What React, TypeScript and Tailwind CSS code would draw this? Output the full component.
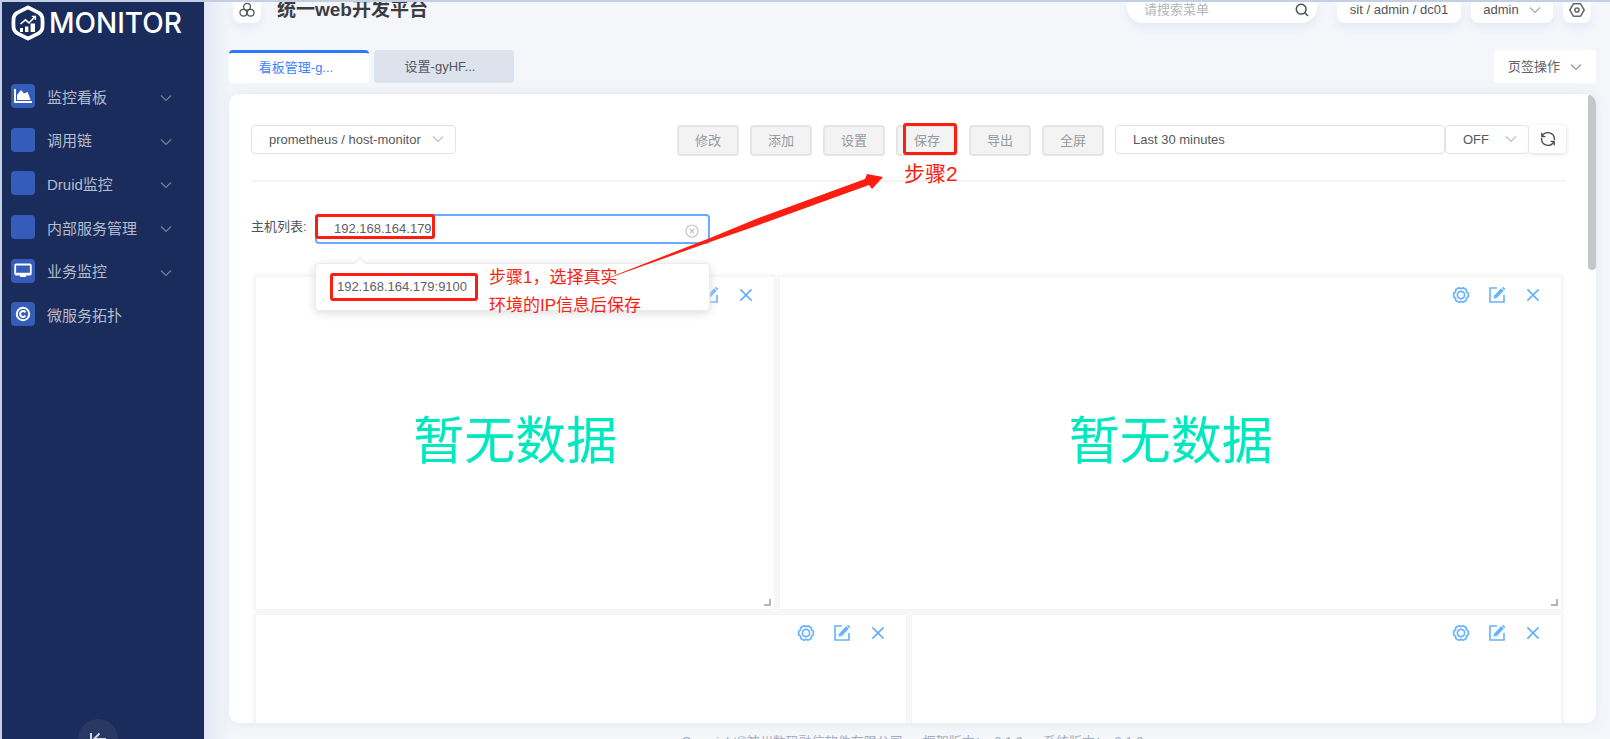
import type { ReactNode } from "react";

type IconProps = { className?: string };

function Chevron({ className = "" }: IconProps) {
  return (
    <svg viewBox="0 0 12 12" className={`size-3 shrink-0 ${className}`} fill="none" stroke="currentColor" strokeWidth="1.1">
      <path d="M1 3.5 6 8.5 11 3.5" />
    </svg>
  );
}

function LogoMark() {
  return (
    <svg viewBox="0 0 34 36" className="h-9 w-[34px] shrink-0" fill="none">
      <path d="M17 2.4 27.5 7.6Q30.8 9.5 31.4 13L31.6 18 31.4 23Q30.8 26.5 27.5 28.4L17 33.6 6.5 28.4Q3.2 26.5 2.6 23L2.4 18 2.6 13Q3.2 9.5 6.5 7.6Z" stroke="#fff" strokeWidth="3.8" strokeLinejoin="round" />
      <path d="M9.5 19 14.5 14.8 18 18 24 11.6" stroke="#fff" strokeWidth="1.6" />
      <path d="M20.8 11.4H24.4V15" stroke="#fff" strokeWidth="1.4" />
      <path d="M9 23h3v4H9zM14 21.5h3.4V27H14zM19.6 18.5H24V27h-4.4z" fill="#fff" />
    </svg>
  );
}

function AreaIcon() {
  return (
    <svg viewBox="0 0 20 16" className="h-4 w-5" fill="#fff">
      <path d="M1 1h2v12h16v2H1z" />
      <path d="M4 12V7l4-5 3 3.6L14.6 4 17.6 12z" />
    </svg>
  );
}

function ScreenIcon() {
  return (
    <svg viewBox="0 0 18 16" className="h-4 w-[18px]" fill="none">
      <rect x="1.2" y="1.5" width="15.6" height="10" rx="1" stroke="#fff" strokeWidth="1.8" />
      <path d="M2 9.8h14v1.7H2zM6 12h6v2H6z" fill="#fff" />
    </svg>
  );
}

function CopyrightIcon() {
  return (
    <svg viewBox="0 0 16 16" className="size-4" fill="none" stroke="#fff">
      <circle cx="8" cy="8" r="6.2" strokeWidth="2" />
      <path d="M10.4 6.3A2.9 2.9 0 1 0 10.4 9.7" strokeWidth="2" />
    </svg>
  );
}

function TrefoilIcon() {
  return (
    <svg viewBox="0 0 16 16" className="size-4" fill="none" stroke="#55585e" strokeWidth="1.3">
      <circle cx="8" cy="4.8" r="3.4" />
      <circle cx="4.4" cy="10.7" r="3.4" />
      <circle cx="11.6" cy="10.7" r="3.4" />
    </svg>
  );
}

function HexIcon() {
  return (
    <svg viewBox="0 0 16 16" className="size-4" fill="none" stroke="#65686e" strokeWidth="1.5" strokeLinejoin="round">
      <path d="M4.4 1.8h7.2L15.2 8l-3.6 6.2H4.4L.8 8z" />
      <circle cx="8" cy="8" r="2.1" />
    </svg>
  );
}

function SearchIcon() {
  return (
    <svg viewBox="0 0 14 14" className="size-3.5" fill="none" stroke="#4a4d53" strokeWidth="1.5">
      <circle cx="6.2" cy="6.2" r="4.9" />
      <path d="M9.8 9.8 13 13" />
    </svg>
  );
}

function RefreshIcon() {
  return (
    <svg viewBox="0 0 16 16" className="size-4" fill="none" stroke="#4a4d53" strokeWidth="1.4">
      <path d="M2.2 5.4A6.4 6.4 0 0 1 14.4 8V9" />
      <path d="M13.8 10.6A6.4 6.4 0 0 1 1.6 8V7" />
      <path d="M1.8 1.8v3.8H5.4M14.2 14.2V10.4H10.6" />
    </svg>
  );
}

const gearPath =
  Array.from({ length: 72 }, (_, i) => {
    const a = (i / 72) * Math.PI * 2;
    const r = 7.1 + 0.5 * Math.cos(6 * a) - 0.3 * Math.cos(12 * a);
    return `${i ? "L" : "M"}${(9 + r * Math.cos(a)).toFixed(2)} ${(9 + r * Math.sin(a)).toFixed(2)}`;
  }).join("") + "Z";

function GearIcon() {
  return (
    <svg viewBox="0 0 18 18" className="size-[18px]" fill="none" stroke="#66b1ff" strokeWidth="1.7">
      <path d={gearPath} />
      <circle cx="9" cy="9" r="3.6" />
    </svg>
  );
}

function EditIcon() {
  return (
    <svg viewBox="0 0 18 18" className="size-[18px]" fill="none" stroke="#66b1ff">
      <path d="M9 2H2v14h14V9" strokeWidth="1.6" />
      <path d="M7.8 10.4 14.4 3.6" strokeWidth="3.6" />
      <path d="M14.6 1.4 16.8 3.6" strokeWidth="1.6" />
      <path d="M6.4 9.2 5.8 12.2 9 11.8z" fill="#66b1ff" strokeWidth=".5" />
    </svg>
  );
}

function CloseIcon() {
  return (
    <svg viewBox="0 0 18 18" className="size-[18px]" fill="none" stroke="#5cadff" strokeWidth="1.5">
      <path d="M3.4 3.4 14.6 14.6M14.6 3.4 3.4 14.6" />
    </svg>
  );
}

const menu: { label: string; icon?: ReactNode; leaf?: boolean }[] = [
  { label: "监控看板", icon: <AreaIcon /> },
  { label: "调用链" },
  { label: "Druid监控" },
  { label: "内部服务管理" },
  { label: "业务监控", icon: <ScreenIcon /> },
  { label: "微服务拓扑", icon: <CopyrightIcon />, leaf: true },
];

function Sidebar() {
  return (
    <aside className="flex w-[202px] shrink-0 flex-col bg-[#1a2c5b]">
      <div className="flex items-center gap-1 pt-[3px] pl-[9px] text-white">
        <LogoMark />
        <span className="font-[Inter,sans-serif] text-[28px] leading-9 font-medium">MONITOR</span>
      </div>
      <nav className="mt-[35px] flex h-[262px] flex-col">
        {menu.map((m) => (
          <button key={m.label} type="button" className="flex w-full flex-1 items-center pr-8 pl-[9px] text-left text-[15px] text-[#b5bccd]">
            <span className="mb-1 flex size-6 shrink-0 items-center justify-center rounded bg-[#355cb9]">{m.icon}</span>
            <span className="ml-3 flex-1">{m.label}</span>
            {!m.leaf && <Chevron className="text-[#74809e]" />}
          </button>
        ))}
      </nav>
      <button
        type="button"
        aria-label="收起菜单"
        className="mt-auto -mb-[20px] ml-[76px] flex size-10 shrink-0 items-center justify-center rounded-full bg-[#273864]"
      >
        <svg viewBox="0 0 18 14" className="h-3.5 w-[18px]" fill="none" stroke="#d3d8e3" strokeWidth="2">
          <path d="M2 1v12M17 7H5M10.5 1.5 5 7l5.5 5.5" />
        </svg>
      </button>
    </aside>
  );
}

function Header() {
  const box = "flex h-[21px] items-center bg-white pb-1.5 shadow-[0_4px_8px_#e3e9f4]";
  return (
    <header className="flex h-[21px] shrink-0 items-center pr-[5px] pl-1 text-[13px] text-[#505359]">
      <button type="button" aria-label="应用" className={`${box} w-7 justify-center rounded-b-lg`}>
        <TrefoilIcon />
      </button>
      <h1 className="ml-4 pb-1.5 text-[19px] leading-5 font-bold text-[#3b3d42]">统一web开发平台</h1>
      <label className={`${box} ml-auto w-[190px] rounded-b-2xl pr-2 pl-[17px]`}>
        <input aria-label="搜索菜单" placeholder="请搜索菜单" className="min-w-0 flex-1 outline-none placeholder:text-[#b2b5bb]" />
        <SearchIcon />
      </label>
      <button type="button" className={`${box} ml-5 w-[124px] justify-center rounded-b-lg`}>sit / admin / dc01</button>
      <button type="button" className={`${box} ml-[10px] w-[82px] justify-center gap-2.5 rounded-b-lg`}>
        admin
        <Chevron className="text-[#a3a6ad]" />
      </button>
      <button type="button" aria-label="设置" className={`${box} ml-[10px] w-7 justify-center rounded-b-lg`}>
        <HexIcon />
      </button>
    </header>
  );
}

function Card({ className = "", empty = false }: { className?: string; empty?: boolean }) {
  return (
    <section className={`flex flex-col bg-white shadow-[0_0_4px_2px_#f1f1f1] ${className}`}>
      <div className="flex h-9 shrink-0 items-center justify-end gap-[18px] pr-[19px]">
        <button type="button" aria-label="设置"><GearIcon /></button>
        <button type="button" aria-label="编辑"><EditIcon /></button>
        <button type="button" aria-label="关闭"><CloseIcon /></button>
      </div>
      {empty && (
        <>
          <p className="flex flex-1 items-center justify-center pb-7 text-[51px] text-[#00e8bd]">暂无数据</p>
          <span className="mr-[3px] mb-[3px] size-[7px] self-end border-r-2 border-b-2 border-[#b5b5b5]" />
        </>
      )}
    </section>
  );
}

function Toolbar() {
  return (
    <div className="flex items-start gap-[11px] border-b-2 border-[#f4f4f5] pb-6 text-[13px] text-[#55585e]">
      <div className="relative mr-auto">
        <select aria-label="看板" className="h-[29px] w-[205px] appearance-none rounded border border-[#dfe2ea] bg-white pl-[17px] outline-none">
          <option>prometheus / host-monitor</option>
        </select>
        <Chevron className="pointer-events-none absolute top-2 right-3 text-[#b9bdc6]" />
      </div>
      {["修改", "添加", "设置", "保存", "导出", "全屏"].map((b) => (
        <div key={b} className="relative">
          <button type="button" className="h-[31px] w-[62px] rounded border-2 border-[#e4e5e8] bg-[#f3f3f4] text-[#96999f]">{b}</button>
          {b === "保存" && (
            <>
              <span className="pointer-events-none absolute -top-0.5 left-[7px] h-8 w-[54px] rounded-[3px] border-3 border-[#fd1d11]" />
              <span className="absolute top-[35px] left-2 text-[21px] leading-7 whitespace-nowrap text-[#fd1d11]">步骤2</span>
            </>
          )}
        </div>
      ))}
      <div className="flex">
        <input aria-label="时间范围" readOnly value="Last 30 minutes" className="h-[29px] w-[330px] rounded border border-[#dfe2ea] pl-[17px] outline-none" />
        <div className="relative">
          <select aria-label="自动刷新" className="h-[29px] w-[84px] appearance-none rounded border border-[#dfe2ea] bg-white pl-[17px] outline-none">
            <option>OFF</option>
          </select>
          <Chevron className="pointer-events-none absolute top-2 right-3 text-[#b9bdc6]" />
        </div>
        <button type="button" aria-label="刷新" className="flex h-7 w-[37px] items-center justify-center rounded bg-white shadow-[0_1px_4px_#d9dbe0]">
          <RefreshIcon />
        </button>
      </div>
    </div>
  );
}

function HostFilter() {
  return (
    <div className="mt-8 flex items-center text-[13px] text-[#606266]">
      <label htmlFor="host" className="w-[64px] pb-1 text-[#505359]">主机列表:</label>
      <div className="relative w-[395px]">
        <input id="host" defaultValue="192.168.164.179" className="h-[30px] w-full rounded border-2 border-[#68abff] bg-white pb-0.5 pl-[17px] outline-none" />
        <button type="button" aria-label="清除" className="absolute top-2.5 right-[11px]">
          <svg viewBox="0 0 14 14" className="size-3.5" fill="none" stroke="#c0c4cc">
            <circle cx="7" cy="7" r="6" strokeWidth="1.2" />
            <path d="M5 5l4 4M9 5 5 9" strokeWidth="1.2" />
          </svg>
        </button>
        <span className="pointer-events-none absolute top-0 left-0 h-[25px] w-[120px] rounded-[3px] border-3 border-[#fd1d11]" />

        <div className="absolute top-[49px] left-0 z-10 h-12 w-full rounded border border-[#e9ebf0] bg-white shadow-[0_2px_10px_#dcdcdc]">
          <span className="absolute -top-[5px] left-10 size-2 rotate-45 border-t border-l border-[#e9ebf0] bg-white" />
          <button type="button" className="absolute top-[9px] left-[14px] h-7 w-[148px] rounded-[3px] border-3 border-[#fd1d11] pr-1 text-center">
            192.168.164.179:9100
          </button>
        </div>
        <p className="pointer-events-none absolute top-[50px] left-[174px] z-20 text-[17px] leading-7 whitespace-nowrap text-[#fd1d11]">
          步骤1，选择真实
          <br />
          环境的IP信息后保存
        </p>
        <svg viewBox="0 0 310 120" className="pointer-events-none absolute -top-12 left-[264px] z-20 h-[120px] w-[310px]" fill="#fd1d11">
          <path d="M16 117 131 72 177 53 286 13 288 8 304 11 293 23 290 19 177 60 131 76Z" />
        </svg>
      </div>
    </div>
  );
}

export default function App() {
  return (
    <div className="flex h-screen overflow-hidden border-t-2 border-l-2 border-[#c5cfe4] bg-[#f4f6fa] font-['Liberation_Sans','Noto_Sans_CJK_SC',sans-serif]">
      <Sidebar />
      <main className="flex min-w-0 flex-1 flex-col bg-[linear-gradient(90deg,#e2e9f6,#f4f6fa_26px)] pr-3.5 pl-[25px]">
        <Header />
        <div className="mt-[27px] flex h-[33px] shrink-0 gap-[5px] text-[13px]">
          <button type="button" className="w-[140px] rounded-sm border-t-3 border-[#2d78ff] bg-white pr-1.5 text-[#3b82ff]">看板管理-g...</button>
          <button type="button" className="w-[140px] rounded-sm bg-[#dde3ec] pr-2 text-[#55585e]">设置-gyHF...</button>
          <button type="button" className="ml-auto flex w-[102px] items-center justify-center gap-2.5 rounded-sm bg-white text-[#606266]">
            页签操作
            <Chevron className="text-[#909399]" />
          </button>
        </div>
        <div className="mt-[11px] flex min-h-0 flex-1 overflow-hidden rounded-[10px] bg-white shadow-[0_0_14px_#e4e8ef]">
          <div className="min-w-0 flex-1 pt-[31px] pr-[22px] pl-[22px]">
            <Toolbar />
            <HostFilter />
            <div className="mt-[33px] mr-[5px] ml-[5px] grid grid-cols-5 gap-1.5">
              <Card empty className="col-span-2 h-[332px]" />
              <Card empty className="col-span-3 h-[332px]" />
            </div>
            <div className="mt-1.5 mr-[5px] ml-[5px] grid grid-cols-2 gap-1.5">
              <Card className="h-[332px]" />
              <Card className="h-[332px]" />
            </div>
          </div>
          <div className="h-44 w-2 shrink-0 rounded-full bg-[#c5c6ca]" />
        </div>
        <footer className="flex h-4 shrink-0 items-start justify-center gap-5 pt-2.5 text-[13px] leading-[18px] whitespace-nowrap text-[#a3abbb]">
          <span>Copyright©神州数码融信软件有限公司</span>
          <span>框架版本：v3.1.0</span>
          <span>系统版本：v3.1.0</span>
        </footer>
      </main>
    </div>
  );
}
